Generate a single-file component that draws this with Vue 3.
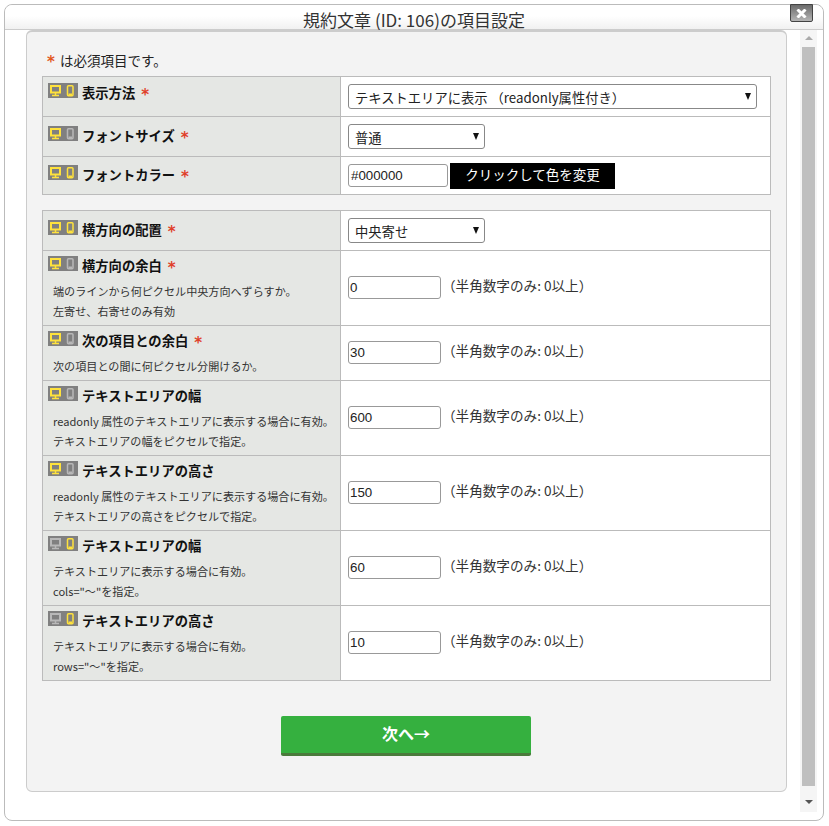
<script setup>
const tableA = [
  { title: '表示方法', req: true, pc: 1, sp: 1, h: 40, top: 6, kind: 'wide', value: 'テキストエリアに表示 （readonly属性付き）' },
  { title: 'フォントサイズ', req: true, pc: 1, sp: 0, h: 40, top: 9, kind: 'select', value: '普通' },
  { title: 'フォントカラー', req: true, pc: 1, sp: 1, h: 38, top: 8, kind: 'color', value: '#000000' }
]
const tableB = [
  { title: '横方向の配置', req: true, pc: 1, sp: 1, h: 40, top: 9, kind: 'select', value: '中央寄せ' },
  { title: '横方向の余白', req: true, pc: 1, sp: 0, h: 75, top: 5, kind: 'num', value: '0', notes: ['端のラインから何ピクセル中央方向へずらすか。', '左寄せ、右寄せのみ有効'] },
  { title: '次の項目との余白', req: true, pc: 1, sp: 0, h: 55, top: 5, kind: 'num', value: '30', notes: ['次の項目との間に何ピクセル分開けるか。'] },
  { title: 'テキストエリアの幅', pc: 1, sp: 0, h: 75, top: 5, kind: 'num', value: '600', notes: ['readonly 属性のテキストエリアに表示する場合に有効。', 'テキストエリアの幅をピクセルで指定。'] },
  { title: 'テキストエリアの高さ', pc: 1, sp: 0, h: 75, top: 5, kind: 'num', value: '150', notes: ['readonly 属性のテキストエリアに表示する場合に有効。', 'テキストエリアの高さをピクセルで指定。'] },
  { title: 'テキストエリアの幅', pc: 0, sp: 1, h: 75, top: 5, kind: 'num', value: '60', notes: ['テキストエリアに表示する場合に有効。', 'cols="～"を指定。'] },
  { title: 'テキストエリアの高さ', pc: 0, sp: 1, h: 75, top: 5, kind: 'num', value: '10', notes: ['テキストエリアに表示する場合に有効。', 'rows="～"を指定。'] }
]
const tables = [tableA, tableB]
const on = '#ffe23c'
const off = '#b8b8b8'
</script>

<template>
  <div class="dialog">
    <header class="titlebar">規約文章 (ID: 106)の項目設定</header>
    <button class="close" aria-label="閉じる">
      <svg width="11" height="9" viewBox="0 0 11 9"><path d="M1.5 0.5 L9.5 8.5 M9.5 0.5 L1.5 8.5" stroke="#fff" stroke-width="3" /></svg>
    </button>
    <div class="body">
      <main class="panel">
        <p class="legend"><span class="mark">*</span><span class="legend-text">は必須項目です。</span></p>
        <div v-for="(rows, t) in tables" :key="t" class="table">
          <div v-for="row in rows" :key="row.title + row.value" class="row" :style="{ height: row.h + 'px' }">
            <div class="head" :style="{ paddingTop: row.top + 'px' }">
              <div class="head-line">
                <span class="devices">
                  <svg width="30" height="15" viewBox="0 0 30 15">
                    <g :stroke="row.pc ? on : off" fill="none">
                      <rect x="3" y="3" width="9" height="6.5" stroke-width="2" />
                      <path d="M7.5 10 V12.5 M4 12.5 H11" stroke-width="1.5" />
                    </g>
                    <rect x="19.5" y="2.75" width="5.5" height="10" rx="1" fill="none" stroke-width="1.5" :stroke="row.sp ? on : off" />
                    <rect x="20.5" y="10.5" width="3.5" height="1.5" :fill="row.sp ? on : off" />
                  </svg>
                </span>
                <strong class="name">{{ row.title }}</strong>
                <span v-if="row.req" class="mark req">*</span>
              </div>
              <p v-for="note in row.notes" :key="note" class="note">{{ note }}</p>
            </div>
            <div class="cell">
              <div v-if="row.kind === 'wide'" class="select wide">{{ row.value }}<i class="caret"></i></div>
              <div v-else-if="row.kind === 'select'" class="select">{{ row.value }}<i class="caret"></i></div>
              <template v-else-if="row.kind === 'color'">
                <div class="input color">{{ row.value }}</div>
                <div class="swatch">クリックして色を変更</div>
              </template>
              <template v-else>
                <div class="input number">{{ row.value }}</div>
                <span class="hint">（半角数字のみ: 0以上）</span>
              </template>
            </div>
          </div>
        </div>
        <div class="actions"><button class="next">次へ→</button></div>
      </main>
      <aside class="scrollbar">
        <i class="arrow up"></i>
        <div class="thumb"></div>
        <i class="arrow down"></i>
      </aside>
    </div>
  </div>
</template>

<style scoped>
.dialog {
  position: relative;
  box-sizing: border-box;
  width: 820px;
  height: 817px;
  margin: 4px 0 0 4px;
  border: 1px solid #bbb;
  border-radius: 8px;
  background: #fff;
  font-family: "Noto Sans CJK JP", "Noto Sans", sans-serif;
  font-size: 13px;
  color: #222;
}
.titlebar {
  box-sizing: border-box;
  height: 25px;
  border-bottom: 1px solid #ccc;
  border-radius: 8px 8px 0 0;
  background: linear-gradient(to bottom, #fff 0, #fff 11px, #f1f1f1 100%);
  text-align: center;
  font-size: 17px;
  line-height: 29px;
  color: #333;
  white-space: nowrap;
}
.close {
  position: absolute;
  top: -1px;
  right: 10px;
  width: 23px;
  height: 18px;
  padding: 0;
  border: 1px solid #444;
  border-radius: 0 0 2px 2px;
  background: linear-gradient(to bottom, #6b6b6b, #b5b5b5);
  display: flex;
  align-items: center;
  justify-content: center;
}
.body {
  display: flex;
  align-items: flex-start;
  height: 790px;
}
.panel {
  box-sizing: border-box;
  width: 761px;
  height: 762px;
  margin-left: 21px;
  padding: 15px 15px 0;
  background: #f3f3f3;
  border: 1px solid #ccc;
  border-top-width: 2px;
  border-radius: 6px;
}
.legend {
  display: flex;
  margin: 0;
  height: 29px;
  padding-left: 5px;
  font-size: 13px;
  line-height: 26px;
}
.legend-text {
  margin-left: 5px;
  font-size: 13.5px;
}
.mark {
  width: 8px;
  color: #e2571e;
  font-weight: 700;
  font-size: 15px;
  line-height: 30px;
  font-family: "DejaVu Sans", sans-serif;
}
.req {
  margin-left: 6px;
  line-height: 24px;
  color: #e0402a;
}
.table {
  width: 729px;
  margin-bottom: 15px;
  border: 1px solid #bbb;
  border-bottom: 0;
  box-sizing: border-box;
  background: #fff;
}
.row {
  display: flex;
  box-sizing: border-box;
  border-bottom: 1px solid #bbb;
}
.head {
  box-sizing: border-box;
  width: 298px;
  flex: none;
  padding: 5px 5px 0;
  background: #e5e7e4;
  border-right: 1px solid #bbb;
}
.head-line {
  display: flex;
  align-items: flex-start;
  height: 21px;
}
.devices {
  flex: none;
  width: 30px;
  height: 15px;
  background: #808080;
}
.devices svg {
  display: block;
}
.name {
  margin-left: 4px;
  font-size: 13.3px;
  line-height: 19px;
  color: #111;
  font-weight: 700;
}
.note {
  margin: 0 0 0 5px;
  font-size: 11.1px;
  line-height: 20px;
  color: #333;
  white-space: nowrap;
}
.note:first-of-type {
  margin-top: 4px;
}
.cell {
  flex: 1;
  display: flex;
  align-items: center;
  padding-left: 7px;
}
.select {
  position: relative;
  box-sizing: border-box;
  align-self: flex-start;
  width: 137px;
  height: 25px;
  margin-top: 7px;
  padding-left: 6px;
  border: 1px solid #888;
  border-radius: 3px;
  background: #fff;
  font-size: 13.3px;
  line-height: 25px;
  color: #222;
}
.wide {
  width: 409px;
}
.caret {
  position: absolute;
  right: 5px;
  top: 8px;
  width: 0;
  height: 0;
  border-left: 3.5px solid transparent;
  border-right: 3.5px solid transparent;
  border-top: 7px solid #111;
}
.input {
  box-sizing: border-box;
  width: 93px;
  height: 23px;
  padding-left: 2px;
  border: 1px solid #999;
  border-radius: 3px;
  background: #fff;
  font-family: "Liberation Sans", sans-serif;
  font-size: 13.3px;
  line-height: 21px;
  color: #222;
}
.number {
  margin-bottom: 2px;
  padding-left: 1px;
}
.color {
  width: 100px;
}
.swatch {
  width: 165px;
  height: 26px;
  margin-left: 2px;
  background: #000;
  color: #fff;
  text-align: center;
  font-size: 13.5px;
  line-height: 23px;
}
.hint {
  margin: 0 0 7px 1px;
  font-size: 13.6px;
  color: #333;
}
.actions {
  display: flex;
  justify-content: center;
  padding: 20px 1px 0 0;
}
.next {
  width: 250px;
  height: 40px;
  padding: 0 0 3px;
  border: 0;
  border-bottom: 3px solid #4a7a3b;
  border-radius: 2px;
  background: #35b03f;
  color: #fff;
  font-family: "Noto Sans CJK JP", sans-serif;
  font-size: 16px;
  font-weight: 700;
}
.scrollbar {
  box-sizing: border-box;
  width: 17px;
  height: 782px;
  margin-left: 13px;
  padding: 0 2px;
  background: #f5f5f5;
  display: flex;
  flex-direction: column;
  align-items: stretch;
}
.arrow {
  display: block;
  align-self: center;
  width: 0;
  height: 0;
  border-left: 4px solid transparent;
  border-right: 4px solid transparent;
}
.up {
  margin: 6px 0 7px;
  border-bottom: 4px solid #aaa;
}
.down {
  margin-top: 14px;
  border-top: 4px solid #555;
}
.thumb {
  flex: none;
  height: 739px;
  background: #bfbfbf;
}
</style>
